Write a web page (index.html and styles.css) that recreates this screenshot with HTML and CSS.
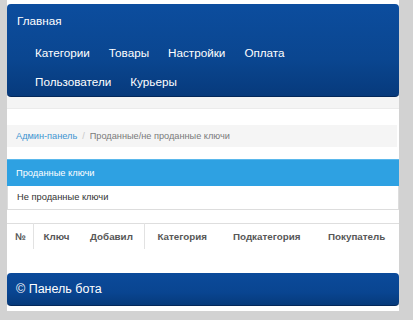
FILE: index.html
```html
<!DOCTYPE html>
<html lang="ru">
<head>
<meta charset="utf-8">
<title>Панель бота</title>
<link rel="stylesheet" href="styles.css">
</head>
<body>
<div class="page">
  <nav class="navbar">
    <div class="brand">Главная</div>
    <ul class="nav-row">
      <li>Категории</li>
      <li>Товары</li>
      <li>Настройки</li>
      <li>Оплата</li>
    </ul>
    <ul class="nav-row">
      <li>Пользователи</li>
      <li>Курьеры</li>
    </ul>
  </nav>
  <main class="content">
    <ol class="breadcrumb">
      <li class="crumb-link">Админ-панель</li>
      <li class="crumb-sep">/</li>
      <li class="crumb-active">Проданные/не проданные ключи</li>
    </ol>
    <div class="list-group">
      <div class="list-item active">Проданные ключи</div>
      <div class="list-item">Не проданные ключи</div>
    </div>
    <table class="keys">
      <thead>
        <tr>
          <th class="c1 sep">№</th>
          <th class="c2">Ключ</th>
          <th class="c3 sep">Добавил</th>
          <th class="c4">Категория</th>
          <th class="c5">Подкатегория</th>
          <th class="c6">Покупатель</th>
        </tr>
      </thead>
    </table>
  </main>
  <footer class="footer">© Панель бота</footer>
</div>
</body>
</html>
```

FILE: styles.css
```css
* { box-sizing: border-box; }
html, body { margin: 0; padding: 0; }
body {
  background: #d2d2d2;
  font-family: "Liberation Sans", Arial, sans-serif;
  height: 320px;
  overflow: hidden;
}
.page {
  margin-left: 7px;
  width: 392px;
  background: #fff;
  padding-top: 4px;
  padding-bottom: 5px;
}
.navbar {
  height: 93px;
  border-radius: 4px;
  background: linear-gradient(#0c4d9e, #0a4690 60%, #073a7c);
  border-bottom: 1px solid #03285a;
  color: #fff;
  font-size: 11.7px;
}
.brand {
  height: 34px;
  line-height: 34px;
  padding-left: 10px;
}
.nav-row {
  list-style: none;
  margin: 0;
  padding: 0 0 0 28px;
  display: flex;
  gap: 19px;
  height: 29px;
  line-height: 29px;
}
.content {
  padding-top: 28px;
  background: linear-gradient(#f4f4f4 0, #f4f4f4 11px, #ebebeb 11px, #ebebeb 12px, #fff 12px);
}
.breadcrumb {
  list-style: none;
  margin: 0 2px 12px 0;
  padding: 0 0 0 9px;
  height: 22px;
  line-height: 22px;
  background: #f5f5f5;
  display: flex;
  gap: 5px;
  font-size: 9.2px;
}
.crumb-link { color: #3d94d1; }
.crumb-sep { color: #c8c8c8; }
.crumb-active { color: #7a7a7a; }
.list-group { margin-bottom: 13px; }
.list-item {
  height: 24px;
  line-height: 23px;
  padding-left: 9px;
  font-size: 9.3px;
  color: #333;
  border: 1px solid #dddddd;
  border-top: 0;
}
.list-item.active {
  height: 27px;
  line-height: 27px;
  background: #2ea1e2;
  border: 0;
  border-top: 1px solid #5ab8ec;
  color: #fff;
}
.keys {
  width: 100%;
  border-collapse: collapse;
  border-top: 1px solid #dedede;
  margin-bottom: 24px;
}
.keys th {
  height: 25px;
  padding: 0 0 0 10px;
  text-align: left;
  font-size: 9.8px;
  font-weight: bold;
  color: #575757;
  white-space: nowrap;
}
.keys th.sep { border-right: 1px solid #e2e2e2; }
.keys .c1 { width: 26px; padding-left: 8px; }
.keys .c2 { width: 47px; }
.keys .c3 { width: 64px; }
.keys .c4 { width: 79px; padding-left: 13px; }
.keys .c5 { width: 95px; }
.keys .c6 { width: 81px; }
.footer {
  height: 33px;
  line-height: 33px;
  padding-left: 9px;
  border-radius: 4px;
  background: linear-gradient(#0b4a9a, #094591 60%, #063a7b);
  border-bottom: 1px solid #03285a;
  color: #fff;
  font-size: 12.5px;
}
```
